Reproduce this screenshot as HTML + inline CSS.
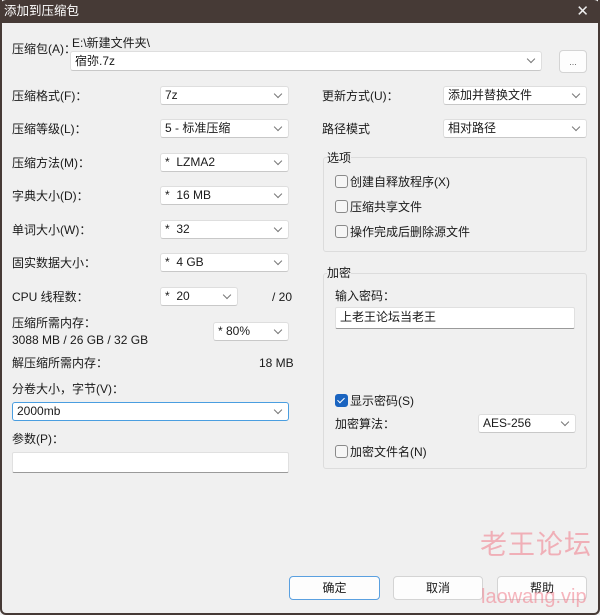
<!DOCTYPE html>
<html><head><meta charset="utf-8"><style>
*{box-sizing:border-box;margin:0;padding:0}
body{width:600px;height:615px;background:#fff;font-family:"Liberation Sans","Noto Sans CJK SC",sans-serif;font-size:12px;color:#1a1a1a;position:relative;overflow:hidden}
.win{position:absolute;left:0;top:0;width:600px;height:615px;background:#f0f0f0}
.frame{position:absolute;left:0;top:0;width:600px;height:615px;border:2px solid #463a36;border-top:none;border-radius:0 0 6px 6px;pointer-events:none}
.title{position:absolute;left:0;top:0;width:600px;height:23px;background:#463a36;color:#fff;font-size:12.5px;line-height:23px;padding-left:4px;border-radius:6px 6px 0 0}
.x{position:absolute;right:11px;top:0;font-size:15px;color:#eee}
.t{position:absolute;white-space:nowrap;line-height:14px}
.cb{position:absolute;height:19px;background:#fff;border:1px solid #dedede;border-bottom-color:#c8c8c8;border-radius:3px;padding-left:4px;line-height:17px;white-space:nowrap}
.cb:after{content:"";position:absolute;right:7px;top:4px;width:5px;height:5px;border-right:1px solid #777;border-bottom:1px solid #777;transform:rotate(45deg)}
.inp{position:absolute;background:#fff;border:1px solid #e0e0e0;border-bottom:1px solid #9a9a9a;border-radius:2px;padding-left:4px;line-height:18px}
.grp{position:absolute;border:1px solid #dcdcdc;border-radius:3px}
.chk{position:absolute;width:13px;height:13px;border:1px solid #8a8a8a;border-radius:3px;background:#f6f6f6}
.btn{position:absolute;height:24px;background:#fdfdfd;border:1px solid #d4d4d4;border-radius:4px;text-align:center;line-height:22px}
</style></head><body>
<div class="win">
<div class="title">添加到压缩包<span class="x">✕</span></div>

<div class="t" style="left:12px;top:42px">压缩包(A)：</div>
<div class="t" style="left:72px;top:36px">E:\新建文件夹\</div>
<div class="cb" style="left:70px;top:51px;width:472px;height:20px;line-height:18px">宿弥.7z</div>
<div class="btn" style="left:559px;top:50px;width:28px;height:23px;font-size:9px;color:#666">...</div>

<div class="t" style="left:12px;top:89px">压缩格式(F)：</div>
<div class="cb" style="left:160px;top:86px;width:129px">7z</div>
<div class="t" style="left:12px;top:122px">压缩等级(L)：</div>
<div class="cb" style="left:160px;top:119px;width:129px">5 - 标准压缩</div>
<div class="t" style="left:12px;top:156px">压缩方法(M)：</div>
<div class="cb" style="left:160px;top:153px;width:129px">*&nbsp; LZMA2</div>
<div class="t" style="left:12px;top:189px">字典大小(D)：</div>
<div class="cb" style="left:160px;top:186px;width:129px">*&nbsp; 16 MB</div>
<div class="t" style="left:12px;top:223px">单词大小(W)：</div>
<div class="cb" style="left:160px;top:220px;width:129px">*&nbsp; 32</div>
<div class="t" style="left:12px;top:256px">固实数据大小：</div>
<div class="cb" style="left:160px;top:253px;width:129px">*&nbsp; 4 GB</div>
<div class="t" style="left:12px;top:290px">CPU 线程数：</div>
<div class="cb" style="left:160px;top:287px;width:78px">*&nbsp; 20</div>
<div class="t" style="left:272px;top:290px">/ 20</div>
<div class="t" style="left:12px;top:316px">压缩所需内存：</div>
<div class="t" style="left:12px;top:333px">3088 MB / 26 GB / 32 GB</div>
<div class="cb" style="left:213px;top:322px;width:76px">* 80%</div>
<div class="t" style="left:12px;top:356px">解压缩所需内存：</div>
<div class="t" style="left:259px;top:356px">18 MB</div>
<div class="t" style="left:12px;top:382px">分卷大小，字节(V)：</div>
<div class="cb" style="left:12px;top:402px;width:277px;border-color:#4a9ee0">2000mb</div>
<div class="t" style="left:12px;top:432px">参数(P)：</div>
<div class="inp" style="left:12px;top:452px;width:277px;height:21px"></div>

<div class="t" style="left:322px;top:89px">更新方式(U)：</div>
<div class="cb" style="left:443px;top:86px;width:144px">添加并替换文件</div>
<div class="t" style="left:322px;top:122px">路径模式</div>
<div class="cb" style="left:443px;top:119px;width:144px">相对路径</div>

<div class="grp" style="left:323px;top:157px;width:264px;height:95px"></div>
<div class="t" style="left:327px;top:151px;background:#f0f0f0">选项</div>
<div class="chk" style="left:335px;top:175px"></div><div class="t" style="left:350px;top:175px">创建自释放程序(X)</div>
<div class="chk" style="left:335px;top:200px"></div><div class="t" style="left:350px;top:200px">压缩共享文件</div>
<div class="chk" style="left:335px;top:225px"></div><div class="t" style="left:350px;top:225px">操作完成后删除源文件</div>

<div class="grp" style="left:323px;top:273px;width:264px;height:196px"></div>
<div class="t" style="left:327px;top:266px;background:#f0f0f0">加密</div>
<div class="t" style="left:335px;top:289px">输入密码：</div>
<div class="inp" style="left:335px;top:307px;width:240px;height:22px;font-size:12px">上老王论坛当老王</div>
<div class="chk" style="left:335px;top:394px;background:#1a64c0;border-color:#1a64c0"><div style="position:absolute;left:3px;top:1px;width:4px;height:7px;border-right:1.5px solid #fff;border-bottom:1.5px solid #fff;transform:rotate(45deg)"></div></div>
<div class="t" style="left:350px;top:394px">显示密码(S)</div>
<div class="t" style="left:335px;top:417px">加密算法：</div>
<div class="cb" style="left:478px;top:414px;width:98px">AES-256</div>
<div class="chk" style="left:335px;top:445px"></div><div class="t" style="left:350px;top:445px">加密文件名(N)</div>

<div class="btn" style="left:289px;top:576px;width:91px;border-color:#5aa0e0">确定</div>
<div class="btn" style="left:393px;top:576px;width:90px">取消</div>
<div class="btn" style="left:497px;top:576px;width:90px">帮助</div>

<div class="t" style="left:480px;top:530px;font-size:27px;line-height:30px;color:rgba(240,110,125,0.5);letter-spacing:1px">老王论坛</div>
<div class="t" style="left:481px;top:586px;font-size:20px;line-height:22px;color:rgba(240,110,125,0.5)">laowang.vip</div>
</div>
<div class="frame"></div>
</body></html>
